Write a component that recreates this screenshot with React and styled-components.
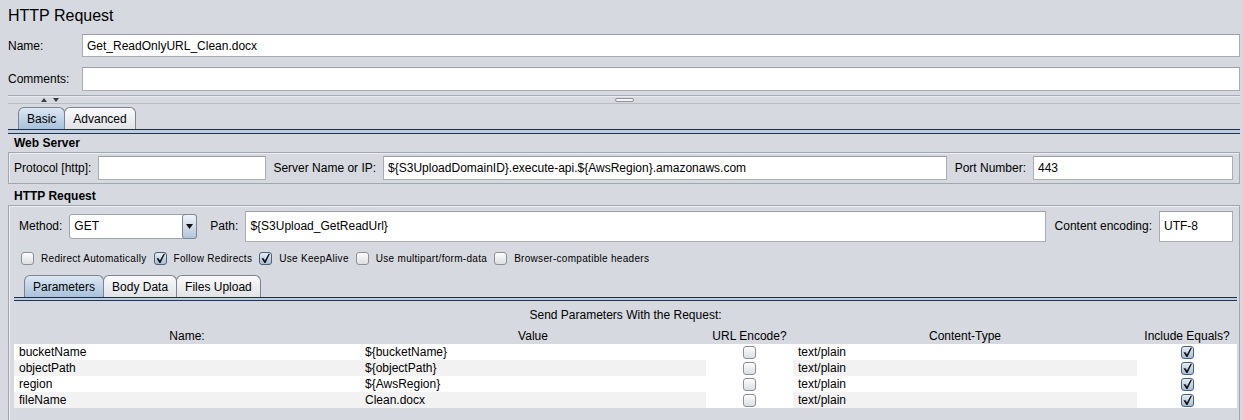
import React from "react";
import styled, { createGlobalStyle } from "styled-components";

const GlobalStyle = createGlobalStyle`
  html, body { margin: 0; padding: 0; background: #d6d9df; }
  body { font-family: "Liberation Sans", Arial, sans-serif; font-size: 12px; color: #000; }
  * { box-sizing: border-box; }
`;

const Page = styled.div`
  width: 1243px;
  height: 420px;
  overflow: hidden;
  background: #d6d9df;
`;

const Top = styled.div`
  padding: 0 3px 0 8px;
`;

const Title = styled.h1`
  margin: 0;
  padding-top: 7px;
  height: 34px;
  font-size: 16px;
  font-weight: normal;
  line-height: 18px;
`;

const FieldRow = styled.div`
  display: grid;
  grid-template-columns: 74px 1fr;
  align-items: center;
  height: ${(p) => p.$h}px;
  margin-bottom: ${(p) => p.$mb || 0}px;
`;

const Label = styled.span`
  white-space: nowrap;
  margin-right: ${(p) => p.$mr || 0}px;
  margin-left: ${(p) => p.$ml || 0}px;
`;

const TextField = styled.input.attrs({ readOnly: true, type: "text" })`
  height: ${(p) => p.$h || 24}px;
  width: ${(p) => (p.$w ? `${p.$w}px` : "100%")};
  flex: ${(p) => (p.$w ? "none" : "1")};
  min-width: 0;
  margin: 0;
  border: 1px solid #a9acb2;
  border-top-color: #9a9da3;
  background: #fff;
  padding: 0 4px;
  font-family: "Liberation Sans", Arial, sans-serif;
  font-size: 12px;
  color: #000;
  outline: none;
`;

const Divider = styled.div`
  margin-top: 4px;
  height: 9px;
  border-top: 1px solid #a8abb1;
  border-bottom: 1px solid #b9bcc2;
  box-shadow: inset 0 1px 0 #e9ebee;
  display: grid;
  grid-template-columns: 1fr auto 1fr;
  align-items: center;
`;

const Arrows = styled.div`
  display: flex;
  gap: 6px;
  padding-left: 33px;
  align-items: center;
`;

const Arrow = styled.span`
  width: 0;
  height: 0;
  border-left: 3px solid transparent;
  border-right: 3px solid transparent;
  ${(p) => (p.$up ? "border-bottom: 4px solid #3a3d44;" : "border-top: 4px solid #3a3d44;")}
`;

const Grip = styled.span`
  width: 19px;
  height: 4px;
  border: 1px solid #8e9197;
  border-radius: 2px;
  background: #f3f4f6;
`;

const TabStrip = styled.div`
  display: flex;
  align-items: flex-end;
  height: 22px;
  margin-top: ${(p) => p.$mt || 0}px;
  padding-left: ${(p) => p.$indent}px;
`;

const Tab = styled.div`
  height: 22px;
  padding: 0 8px;
  margin-right: -1px;
  display: flex;
  align-items: center;
  border: 1px solid #7c8290;
  border-bottom: none;
  border-radius: 6px 6px 0 0;
  background: ${(p) =>
    p.$active
      ? "linear-gradient(#dce7f3, #a8c1db)"
      : "linear-gradient(#fbfbfc, #e0e2e6)"};
  position: relative;
  z-index: ${(p) => (p.$active ? 1 : 0)};
  white-space: nowrap;
`;

const TabRule = styled.div`
  height: ${(p) => p.$h}px;
  border-top: 1px solid #1f2e4c;
  border-bottom: 1px solid #24344f;
  background: #bccde0;
`;

const Main = styled.div`
  padding: 0 3px 0 8px;
`;

const SectionTitle = styled.div`
  font-weight: bold;
  height: 18px;
  line-height: 18px;
  padding-left: 6px;
  margin-top: ${(p) => p.$mt || 0}px;
`;

const Panel = styled.div`
  border: 1px solid #a3a6ad;
  box-shadow: inset 1px 1px 0 #eceef1;
  padding: ${(p) => p.$pad};
`;

const InlineRow = styled.div`
  display: flex;
  align-items: center;
  height: ${(p) => p.$h}px;
  gap: 7px;
  padding: ${(p) => p.$pad || 0};
`;

const Combo = styled.div`
  width: 128px;
  height: 25px;
  flex: none;
  display: flex;
  border: 1px solid #9ea2a9;
  border-radius: 3px;
  background: #fff;
`;

const ComboText = styled.span`
  flex: 1;
  padding-left: 4px;
  line-height: 23px;
`;

const ComboButton = styled.span`
  width: 15px;
  margin: -1px -1px -1px 0;
  border: 1px solid #7f8795;
  border-radius: 3px;
  background: linear-gradient(#eef3f8, #b3c5d9);
  display: flex;
  align-items: center;
  justify-content: center;
`;

const CheckRow = styled.div`
  display: flex;
  align-items: center;
  gap: 7px;
  height: 14px;
  margin-top: 9px;
  padding-left: 7px;
`;

const CheckLabel = styled.span`
  font-size: 10px;
  letter-spacing: 0.3px;
  white-space: nowrap;
`;

const Box = styled.span`
  width: 13px;
  height: 13px;
  flex: none;
  border: 1px solid ${(p) => (p.$checked ? "#4f5f78" : "#8d9096")};
  border-radius: 3px;
  background: ${(p) =>
    p.$checked
      ? "linear-gradient(#e6eef7, #a6bdd6)"
      : "linear-gradient(#fdfdfd, #dcdee2)"};
  display: inline-flex;
  align-items: center;
  justify-content: center;
`;

const ParamsTitle = styled.div`
  height: 28px;
  line-height: 28px;
  text-align: center;
`;

const Table = styled.div`
  display: grid;
  grid-template-columns: 346px 346px 87px 344px 1fr;
`;

const HeadCell = styled.div`
  height: 15px;
  line-height: 15px;
  text-align: center;
  white-space: nowrap;
`;

const Cell = styled.div`
  height: 16px;
  line-height: 16px;
  padding-left: 5px;
  white-space: nowrap;
  background: ${(p) => (p.$alt ? "#f2f2f2" : "#ffffff")};
`;

const CheckCell = styled.div`
  height: 16px;
  background: #fff;
  display: flex;
  align-items: center;
  justify-content: center;
`;

function CheckBox({ checked }) {
  return (
    <Box $checked={checked}>
      {checked && (
        <svg width="11" height="11" viewBox="0 0 11 11">
          <polygon points="1.5,5.2 3.6,5.2 4.9,7.6 8.6,0.8 10,0.8 5.5,10 4.4,10" fill="#111" />
        </svg>
      )}
    </Box>
  );
}

const rows = [
  { name: "bucketName", value: "${bucketName}" },
  { name: "objectPath", value: "${objectPath}" },
  { name: "region", value: "${AwsRegion}" },
  { name: "fileName", value: "Clean.docx" },
];

const checks = [
  { label: "Redirect Automatically", checked: false },
  { label: "Follow Redirects", checked: true },
  { label: "Use KeepAlive", checked: true },
  { label: "Use multipart/form-data", checked: false },
  { label: "Browser-compatible headers", checked: false },
];

export default function App() {
  return (
    <Page>
      <GlobalStyle />
      <Top>
        <Title>HTTP Request</Title>
        <FieldRow $h={23} $mb={10}>
          <Label>Name:</Label>
          <TextField $h={23} value="Get_ReadOnlyURL_Clean.docx" />
        </FieldRow>
        <FieldRow $h={24}>
          <Label>Comments:</Label>
          <TextField $h={24} value="" />
        </FieldRow>
        <Divider>
          <Arrows>
            <Arrow $up />
            <Arrow />
          </Arrows>
          <Grip />
          <span />
        </Divider>
        <TabStrip $indent={10} $mt={3}>
          <Tab $active>Basic</Tab>
          <Tab>Advanced</Tab>
        </TabStrip>
        <TabRule $h={5} />
      </Top>
      <Main>
        <SectionTitle>Web Server</SectionTitle>
        <Panel $pad="3px 6px 3px 5px">
          <InlineRow $h={24}>
            <Label>Protocol [http]:</Label>
            <TextField $w={168} value="" />
            <Label>Server Name or IP:</Label>
            <TextField value="${S3UploadDomainID}.execute-api.${AwsRegion}.amazonaws.com" />
            <Label $ml={1}>Port Number:</Label>
            <TextField $w={200} value="443" />
          </InlineRow>
        </Panel>
        <SectionTitle $mt={3}>HTTP Request</SectionTitle>
        <Panel $pad="4px 2px 20px 5px">
          <InlineRow $h={32} $pad="0 4px 0 5px">
            <Label>Method:</Label>
            <Combo>
              <ComboText>GET</ComboText>
              <ComboButton>
                <svg width="7" height="5" viewBox="0 0 7 5">
                  <polygon points="0,0 7,0 3.5,5" fill="#111" />
                </svg>
              </ComboButton>
            </Combo>
            <Label $ml={6}>Path:</Label>
            <TextField $h={31} value="${S3Upload_GetReadUrl}" />
            <Label $ml={2}>Content encoding:</Label>
            <TextField $h={31} $w={74} value="UTF-8" />
          </InlineRow>
          <CheckRow>
            {checks.map((c) => (
              <React.Fragment key={c.label}>
                <CheckBox checked={c.checked} />
                <CheckLabel>{c.label}</CheckLabel>
              </React.Fragment>
            ))}
          </CheckRow>
          <TabStrip $indent={10} $mt={10}>
            <Tab $active>Parameters</Tab>
            <Tab>Body Data</Tab>
            <Tab>Files Upload</Tab>
          </TabStrip>
          <TabRule $h={4} />
          <ParamsTitle>Send Parameters With the Request:</ParamsTitle>
          <Table>
            <HeadCell>Name:</HeadCell>
            <HeadCell>Value</HeadCell>
            <HeadCell>URL Encode?</HeadCell>
            <HeadCell>Content-Type</HeadCell>
            <HeadCell>Include Equals?</HeadCell>
            {rows.map((r, i) => (
              <React.Fragment key={r.name}>
                <Cell $alt={i % 2 === 1}>{r.name}</Cell>
                <Cell $alt={i % 2 === 1}>{r.value}</Cell>
                <CheckCell>
                  <CheckBox checked={false} />
                </CheckCell>
                <Cell $alt={i % 2 === 1}>text/plain</Cell>
                <CheckCell>
                  <CheckBox checked />
                </CheckCell>
              </React.Fragment>
            ))}
          </Table>
        </Panel>
      </Main>
    </Page>
  );
}
